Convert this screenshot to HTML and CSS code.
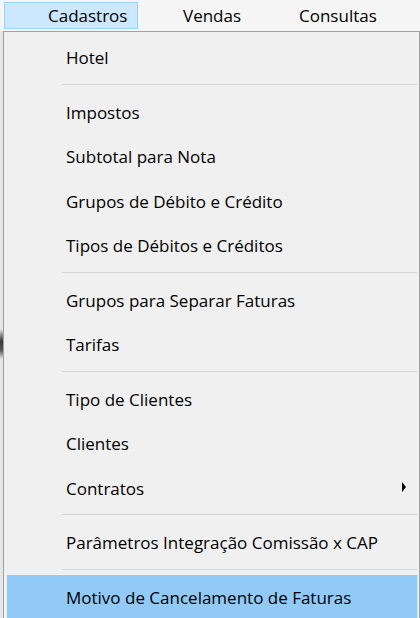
FILE: index.html
```html
<!DOCTYPE html>
<html lang="pt-BR">
  <head>
    <meta charset="UTF-8" />
    <title>Cadastros</title>
    <link rel="stylesheet" href="styles.css">
  </head>
  <body>
    <div class="menubar">
      <div class="menubar-item active cadastros">Cadastros</div>
      <div class="menubar-item vendas">Vendas</div>
      <div class="menubar-item consultas">Consultas</div>
    </div>
    <div class="workspace">
      <div class="backdrop">
        <div class="blob"></div>
      </div>
      <div class="popup">
        <div class="item">Hotel</div>
        <div class="separator"></div>
        <div class="item">Impostos</div>
        <div class="item">Subtotal para Nota</div>
        <div class="item">Grupos de Débito e Crédito</div>
        <div class="item">Tipos de Débitos e Créditos</div>
        <div class="separator"></div>
        <div class="item">Grupos para Separar Faturas</div>
        <div class="item">Tarifas</div>
        <div class="separator"></div>
        <div class="item">Tipo de Clientes</div>
        <div class="item">Clientes</div>
        <div class="item submenu">Contratos <span class="arrow"></span></div>
        <div class="separator"></div>
        <div class="item">Parâmetros Integração Comissão x CAP</div>
        <div class="separator"></div>
        <div class="item hover">Motivo de Cancelamento de Faturas</div>
      </div>
    </div>
  </body>
</html>
```

FILE: styles.css
```css
body {
  font-family: "Open Sans", "Noto Sans", sans-serif;
  font-size: 17px;
  color: #000;
  background-color: #f0f0f0;
  margin: 0;
  overflow: hidden;
  height: 618px;
}

.menubar {
  display: flex;
  height: 31px;
  padding-left: 4px;
  background-color: #f5f5f5;
  box-sizing: border-box;
}

.menubar-item {
  margin-top: 2px;
  height: 27px;
  line-height: 25px;
  box-sizing: border-box;
  border: 1px solid transparent;
  text-align: left;
  white-space: nowrap;
}
.menubar-item.active {
  background-color: #cce8ff;
  border-color: #99d1ff;
}
.cadastros {
  width: 134px;
  padding-left: 43px;
}
.vendas {
  width: 112px;
  padding-left: 44px;
}
.consultas {
  padding-left: 48px;
}

.workspace {
  display: flex;
  height: 587px;
}

.backdrop {
  width: 3px;
  background-color: #e6e6e6;
  display: flex;
  flex-direction: column;
}
.blob {
  margin-top: 298px;
  height: 30px;
  background: linear-gradient(to bottom, #e6e6e6, #3a3a3a 40%, #555 70%, #e6e6e6);
}

.popup {
  width: 417px;
  background-color: #f0f0f0;
  border: 1px solid #a0a0a0;
  border-bottom: none;
  padding: 3px 1px 0 3px;
  box-sizing: border-box;
}

.item {
  height: 44.6px;
  padding-left: 59px;
  padding-top: 1px;
  box-sizing: border-box;
  white-space: nowrap;
  display: flex;
  align-items: center;
}
.item.hover {
  background-color: #91c9f7;
  border-right: 1px solid #cce8ff;
}
.submenu {
  justify-content: space-between;
  padding-right: 12px;
}
.arrow {
  width: 0;
  height: 0;
  border-top: 5px solid transparent;
  border-bottom: 5px solid transparent;
  border-left: 4px solid #000;
  margin-top: -4px;
}

.separator {
  height: 9.8px;
  padding-top: 4px;
  padding-left: 55px;
  padding-right: 1px;
  box-sizing: border-box;
}
.separator::before {
  content: "";
  display: block;
  height: 1px;
  background-color: #d4d4d4;
}
```
